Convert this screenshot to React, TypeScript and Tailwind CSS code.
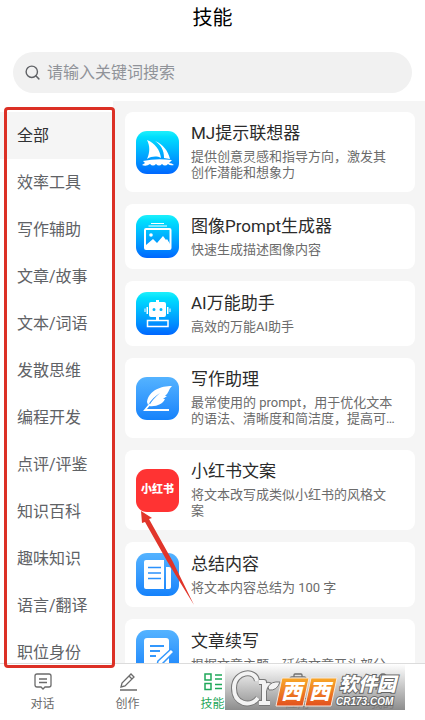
import type { ReactNode } from 'react';
import { Search } from 'lucide-react';

type Skill = {
  title: string,
  text: string,
  icon: ReactNode,
  tile: string,
}

const cyan = 'bg-linear-to-b from-[#1df0fb] to-[#0066ff]';
const blue = 'bg-linear-to-b from-[#54b3ff] to-[#1482fb]';

const categories = [
  '全部', '效率工具', '写作辅助', '文章/故事', '文本/词语', '发散思维',
  '编程开发', '点评/评鉴', '知识百科', '趣味知识', '语言/翻译', '职位身份',
];

const BoatIcon = () => (
  <svg viewBox="0 0 43 43" className="size-full" fill="#fff" aria-hidden="true">
    <path d="M11 9C19 12 24 19 25 27C21 25 16 25 11 28C14 21 14 15 11 9Z" />
    <path d="M19 10C27 13 32 20 34 28L28 27C28 19 25 14 19 10Z" />
    <path d="M7 30Q20 27 36 29L33 32Q36 32 38 34Q34 35 32 33Q29 36 26 33Q23 36 20 33Q17 36 14 33Q10 36 6 34L9 32Z" />
  </svg>
);

const PicturesIcon = () => (
  <svg viewBox="0 0 43 43" className="size-full" fill="none" stroke="#fff" aria-hidden="true">
    <path d="M15 8.5H28M12.5 11H31" strokeWidth="1" />
    <rect x="9" y="14" width="25.5" height="20" rx="1" strokeWidth="2" />
    <path d="M10 34V30L17 24L21 28L27 21L30 25L31 24L34 29V34Z" fill="#fff" stroke="none" />
    <circle cx="15" cy="20" r="1.8" fill="#fff" stroke="none" />
  </svg>
);

const RobotIcon = () => (
  <svg viewBox="0 0 43 43" className="size-full" fill="#fff" aria-hidden="true">
    <path fillRule="evenodd" d="M15 10H20V8H23V10H28Q30 10 30 12V23Q30 25 28 25H15Q13 25 13 23V12Q13 10 15 10ZM18 16A1.5 1.5 0 1 0 18 19A1.5 1.5 0 1 0 18 16ZM25 16A1.5 1.5 0 1 0 25 19A1.5 1.5 0 1 0 25 16Z" />
    <path d="M10.5 15H12V22H10.5ZM31 15H32.5V22H31ZM8.5 16.5H9.5V20H8.5ZM33.5 16.5H34.5V20H33.5ZM20 25H23V29H20Z" />
    <rect x="11.500" y="28.500" width="20.500" height="6" fill="none" stroke="#fff" strokeWidth="1.5" />
  </svg>
);

const QuillIcon = () => (
  <svg viewBox="0 0 43 43" className="size-full" fill="none" aria-hidden="true">
    <path d="M36 9C25 9 13 13 11 25L12 28C15 23 19 19 24 16C19 20 15 25 13 29C20 30 27 27 29 22L27 22L31 19L29 19C33 16 32 13 36 9Z" fill="#fff" />
    <path d="M14 27L9 33H33" stroke="#fff" strokeWidth="1.8" />
  </svg>
);

const RedBookIcon = () => (
  <span className="flex size-full items-center justify-center text-[11px] font-black text-white">小红书</span>
);

const SummaryIcon = () => (
  <svg viewBox="0 0 43 43" className="size-full" fill="none" aria-hidden="true">
    <path d="M10 7H28V36H10Q8 36 8 34V9Q8 7 10 7Z" fill="#fff" />
    <path d="M12 14.5H25M12 20H25M12 25.5H25" stroke="#2b91fc" strokeWidth="1.6" />
    <path d="M30 14H33Q35 14 35 16V34Q35 36 33 36H30Z" fill="#fff" />
  </svg>
);

const ContinueIcon = () => (
  <svg viewBox="0 0 43 43" className="size-full" fill="none" aria-hidden="true">
    <path d="M11 8H30Q33 8 33 11V34H8V11Q8 8 11 8Z" fill="#fff" />
    <path d="M14 16H28M14 21H24M14 26H20" stroke="#3398fd" strokeWidth="1.8" />
    <path d="M22 31L35 19L38 22L26 34L21 35Z" fill="#fff" stroke="#3398fd" strokeWidth="1.5" />
  </svg>
);

const skills: Skill[] = [
  { title: 'MJ提示联想器', text: '提供创意灵感和指导方向，激发其创作潜能和想象力', icon: <BoatIcon />, tile: cyan },
  { title: '图像Prompt生成器', text: '快速生成描述图像内容', icon: <PicturesIcon />, tile: cyan },
  { title: 'AI万能助手', text: '高效的万能AI助手', icon: <RobotIcon />, tile: cyan },
  { title: '写作助理', text: '最常使用的 prompt，用于优化文本的语法、清晰度和简洁度，提高可…', icon: <QuillIcon />, tile: blue },
  { title: '小红书文案', text: '将文本改写成类似小红书的风格文案', icon: <RedBookIcon />, tile: 'bg-[#ff3333]' },
  { title: '总结内容', text: '将文本内容总结为 100 字', icon: <SummaryIcon />, tile: blue },
  { title: '文章续写', text: '根据文章主题，延续文章开头部分', icon: <ContinueIcon />, tile: blue },
];

const SkillCard = ({ title, text, icon, tile }: Skill) => (
  <button type="button" className="flex w-full shrink-0 items-center gap-3 rounded-lg bg-white py-[11px] pr-5 pl-[11px] text-left">
    <span className={`size-[43px] shrink-0 overflow-hidden rounded-[11px] ${tile}`}>{icon}</span>
    <span className="min-w-0 flex-1">
      <span className="block text-[17px] leading-5 text-[#2b2b2b]">{title}</span>
      <span className="mt-[6px] line-clamp-2 text-[13px] leading-4 text-[#6b6b6b]">{text}</span>
    </span>
  </button>
);

const ChatIcon = () => (
  <svg viewBox="0 0 20 20" className="size-5" fill="none" stroke="currentColor" strokeWidth="1.3" aria-hidden="true">
    <path d="M4 2H16Q18 2 18 4V13Q18 15 16 15H12L10 17L8 15H4Q2 15 2 13V4Q2 2 4 2ZM6 7H14M6 10.500H14" />
  </svg>
);

const PenIcon = () => (
  <svg viewBox="0 0 20 20" className="size-5" fill="none" stroke="currentColor" strokeWidth="1.3" aria-hidden="true">
    <path d="M3 15L4 11L13 2L16 5L7 14ZM11 4L14 7M2 18H19" />
  </svg>
);

const SkillsIcon = () => (
  <svg viewBox="0 0 20 20" className="size-5" fill="none" stroke="currentColor" strokeWidth="1.5" aria-hidden="true">
    <path d="M2 2H8V8H2ZM2 11.500H8V17.500H2ZM12 3H19M12 7H19M12 12.500H19M12 16.500H19" />
  </svg>
);

const AppsIcon = () => (
  <svg viewBox="0 0 20 20" className="size-5" fill="none" stroke="currentColor" strokeWidth="1.3" aria-hidden="true">
    <path d="M6 5V3Q6 2 7 2H13Q14 2 14 3V5M4 5H16Q18 5 18 7V16H2V7Q2 5 4 5Z" />
  </svg>
);

const MeIcon = () => (
  <svg viewBox="0 0 20 20" className="size-5" fill="none" stroke="currentColor" strokeWidth="1.3" aria-hidden="true">
    <circle cx="10" cy="6" r="4" />
    <path d="M3 18Q3 11 10 11Q17 11 17 18" />
  </svg>
);

const tabs = [
  { name: '对话', icon: <ChatIcon /> },
  { name: '创作', icon: <PenIcon /> },
  { name: '技能', icon: <SkillsIcon /> },
  { name: '应用', icon: <AppsIcon /> },
  { name: '我的', icon: <MeIcon /> },
];

const Watermark = () => (
  <div className="pointer-events-none absolute right-5 bottom-[10px] h-[46px] w-[180px] bg-linear-to-b from-[#808080]/0 to-[#808080]/90">
    <svg viewBox="0 0 180 46" className="size-full" aria-hidden="true">
      <defs>
        <linearGradient id="orange" x1="0" y1="0" x2="0" y2="1">
          <stop offset="0" stopColor="#f9a828" />
          <stop offset="1" stopColor="#e2501e" />
        </linearGradient>
      </defs>
      <g fill="none" strokeLinejoin="round">
        <path d="M32 17C31 5 9 7 9 24C9 40 25 44 33 34M34 18H39V38M34 39H45M39 27Q41 17 47 23" stroke="#777" strokeWidth="6" />
        <path d="M32 17C31 5 9 7 9 24C9 40 25 44 33 34M34 18H39V38M34 39H45M39 27Q41 17 47 23" stroke="#f3f3f3" strokeWidth="4" />
        <path d="M43 23Q46 17 55 18Q52 27 44 26Z" fill="#f3f3f3" stroke="#777" />
      </g>
      <g stroke="#f6e8dc" strokeWidth="1">
        <path d="M57 14H84L78 42H51Z" fill="url(#orange)" />
        <path d="M86 14H112L106 42H80Z" fill="url(#orange)" />
      </g>
      <g fill="#fff" fontFamily="'Noto Sans CJK SC', sans-serif" fontWeight="900" fontStyle="italic">
        <text x="56" y="35" fontSize="21">西</text>
        <text x="84" y="35" fontSize="21">西</text>
        <text x="114" y="27" fontSize="19" stroke="#666" strokeWidth="2" paintOrder="stroke">软件园</text>
        <text x="111" y="41" fontSize="10" fontFamily="'Liberation Sans', sans-serif" stroke="#666" strokeWidth="2" paintOrder="stroke">CR173.COM</text>
      </g>
    </svg>
  </div>
);

const App = () => (
  <div className="relative flex h-screen flex-col overflow-hidden bg-white font-[Roboto,'Noto_Sans_CJK_SC',sans-serif]">
    <header className="px-[13px] pb-2">
      <h1 className="py-1 text-center text-xl leading-7 text-black">技能</h1>
      <label className="mt-4 flex h-[41px] items-center gap-[6px] rounded-full bg-[#f1f1f1] px-[11px]">
        <Search className="size-[17px] text-[#606266]" />
        <input
          type="search"
          aria-label="搜索"
          placeholder="请输入关键词搜索"
          className="min-w-0 flex-1 bg-transparent text-base outline-none placeholder:text-[#909399]"
        />
      </label>
    </header>

    <div className="relative flex min-h-0 flex-1">
      <nav className="w-[113px] shrink-0 overflow-hidden pt-[11px]">
        {categories.map((name, i) => (
          <button
            key={name}
            type="button"
            className={`block h-[47px] w-full pl-[17px] text-left text-base ${i === 0 ? 'bg-[#f5f5f5] text-[#303133]' : 'text-[#606266]'}`}
          >
            {name}
          </button>
        ))}
      </nav>
      <main className="flex min-w-0 flex-1 flex-col gap-3 overflow-hidden bg-[#f5f5f5] py-[11px] pr-[10px] pl-3">
        {skills.map((skill) => <SkillCard key={skill.title} {...skill} />)}
      </main>

      {/* highlight frame and pointer over the list */}
      <div className="pointer-events-none absolute top-[6px] -bottom-[5px] left-1 z-10 w-[111px] rounded-[4px] border-[3px] border-[#dc3025]" />
      <svg viewBox="0 0 56 98" className="pointer-events-none absolute top-[409px] left-[139px] z-10 h-[98px] w-[56px]" aria-hidden="true">
        <path d="M2 1L13 8L10 9L34 52L55 95L28 51L6 12L3 13Z" fill="#e1352a" />
      </svg>
    </div>

    <footer className="flex h-[57px] shrink-0 border-t border-[#dcdcdc] bg-white pt-2">
      {tabs.map(({ name, icon }) => (
        <a
          key={name}
          href="#"
          className={`flex flex-1 flex-col items-center gap-1 text-xs ${name === '技能' ? 'text-[#1fa85a]' : 'text-[#6b6b6b]'}`}
        >
          {icon}
          {name}
        </a>
      ))}
    </footer>
    <Watermark />
  </div>
);

export default App;
